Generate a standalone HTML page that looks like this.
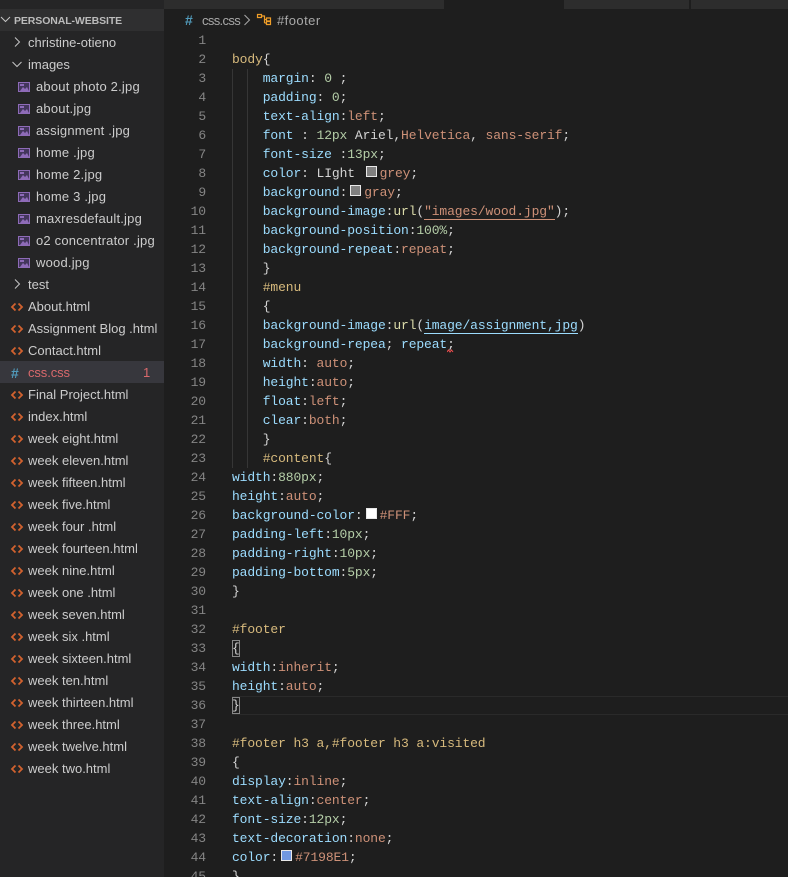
<!DOCTYPE html>
<html><head><meta charset="utf-8"><style>
html,body{margin:0;padding:0;width:788px;height:877px;overflow:hidden;background:#1e1e1e}
#side{position:absolute;left:0;top:0;width:164px;height:877px;background:#252526;font:13px/22px "Liberation Sans",sans-serif;color:#cccccc;overflow:hidden}
#hdr{position:absolute;left:0;top:9px;width:164px;height:22px;background:#2f2f30;font-weight:bold;font-size:10.500px;letter-spacing:-.1px;color:#bbbbbb}
#hdr span{position:absolute;left:14px;top:1px}
.r{position:absolute;left:0;width:164px;height:22px;white-space:nowrap}
.r b{position:absolute;font-weight:normal;top:1px}
.r svg{position:absolute;left:0;top:1px}
.i b{letter-spacing:.2px}
.i rect.o{fill:#43365c;stroke:#8e6bb8}
.h path{fill:none;stroke:#d2622f;stroke-width:1.800}
#tabs{position:absolute;left:164px;top:0;width:624px;height:9px;background:#1e1e1e}
.tab{position:absolute;top:0;height:9px;background:#2d2d2d}
#crumb{position:absolute;left:164px;top:9px;width:624px;height:22px;font:13px/22px "Liberation Sans",sans-serif;color:#a9a9a9}
#code{position:absolute;left:164px;top:31px;width:624px;height:846px;overflow:hidden;font:13px/19px "Liberation Mono",monospace;letter-spacing:-.12px;color:#d4d4d4}
.l{position:absolute;left:0;width:624px;height:19px;white-space:pre}
.n{position:absolute;left:0;width:42px;text-align:right;color:#858585}
.c{position:absolute;left:68px}
.p{color:#9cdcfe}.v{color:#ce9178}.m{color:#b5cea8}.s{color:#d7ba7d}.f{color:#dcdcaa}
.u{border-bottom:1px solid #ce9178}.ub{color:#9cdcfe;border-bottom:1px solid #9cdcfe}
.sw{display:inline-block;width:9px;height:9px;border:1px solid #e8e8e8;margin:0 3px 0 3px;vertical-align:0}
.g{position:absolute;width:1px;background:#363636}
.br{position:absolute;width:8px;height:17px;border:1px solid #888;box-sizing:border-box}
</style></head><body>
<div id="tabs"><div class="tab" style="left:0;width:280px"></div><div class="tab" style="left:400px;width:125px"></div><div class="tab" style="left:527px;width:97px"></div></div>
<div id="side">
<div id="hdr"><svg width="14" height="22" style="position:absolute;left:0;top:0"><path d="M1 8l4.500 4.500L10 8" fill="none" stroke="#c5c5c5" stroke-width="1"/></svg><span>PERSONAL-WEBSITE</span></div>
<div class="r" style="top:31px"><svg width="28" height="22"><path d="M15 5.500l4.500 4.500-4.500 4.500" fill="none" stroke="#c5c5c5"/></svg><b style="left:28px">christine-otieno</b></div>
<div class="r" style="top:53px"><svg width="28" height="22"><path d="M12.500 8l4.500 4.500L21.500 8" fill="none" stroke="#c5c5c5"/></svg><b style="left:28px">images</b></div>
<div class="r i" style="top:75px"><svg width="36" height="22"><rect class="o" x="18.500" y="6.500" width="11" height="9"/><path d="M20 15l3-4 2 2 2-2 2 4z" fill="#8e6bb8"/><rect x="20" y="8" width="4" height="2" fill="#8e6bb8"/></svg><b style="left:36px">about photo 2.jpg</b></div>
<div class="r i" style="top:97px"><svg width="36" height="22"><rect class="o" x="18.500" y="6.500" width="11" height="9"/><path d="M20 15l3-4 2 2 2-2 2 4z" fill="#8e6bb8"/><rect x="20" y="8" width="4" height="2" fill="#8e6bb8"/></svg><b style="left:36px">about.jpg</b></div>
<div class="r i" style="top:119px"><svg width="36" height="22"><rect class="o" x="18.500" y="6.500" width="11" height="9"/><path d="M20 15l3-4 2 2 2-2 2 4z" fill="#8e6bb8"/><rect x="20" y="8" width="4" height="2" fill="#8e6bb8"/></svg><b style="left:36px">assignment .jpg</b></div>
<div class="r i" style="top:141px"><svg width="36" height="22"><rect class="o" x="18.500" y="6.500" width="11" height="9"/><path d="M20 15l3-4 2 2 2-2 2 4z" fill="#8e6bb8"/><rect x="20" y="8" width="4" height="2" fill="#8e6bb8"/></svg><b style="left:36px">home .jpg</b></div>
<div class="r i" style="top:163px"><svg width="36" height="22"><rect class="o" x="18.500" y="6.500" width="11" height="9"/><path d="M20 15l3-4 2 2 2-2 2 4z" fill="#8e6bb8"/><rect x="20" y="8" width="4" height="2" fill="#8e6bb8"/></svg><b style="left:36px">home 2.jpg</b></div>
<div class="r i" style="top:185px"><svg width="36" height="22"><rect class="o" x="18.500" y="6.500" width="11" height="9"/><path d="M20 15l3-4 2 2 2-2 2 4z" fill="#8e6bb8"/><rect x="20" y="8" width="4" height="2" fill="#8e6bb8"/></svg><b style="left:36px">home 3 .jpg</b></div>
<div class="r i" style="top:207px"><svg width="36" height="22"><rect class="o" x="18.500" y="6.500" width="11" height="9"/><path d="M20 15l3-4 2 2 2-2 2 4z" fill="#8e6bb8"/><rect x="20" y="8" width="4" height="2" fill="#8e6bb8"/></svg><b style="left:36px">maxresdefault.jpg</b></div>
<div class="r i" style="top:229px"><svg width="36" height="22"><rect class="o" x="18.500" y="6.500" width="11" height="9"/><path d="M20 15l3-4 2 2 2-2 2 4z" fill="#8e6bb8"/><rect x="20" y="8" width="4" height="2" fill="#8e6bb8"/></svg><b style="left:36px">o2 concentrator .jpg</b></div>
<div class="r i" style="top:251px"><svg width="36" height="22"><rect class="o" x="18.500" y="6.500" width="11" height="9"/><path d="M20 15l3-4 2 2 2-2 2 4z" fill="#8e6bb8"/><rect x="20" y="8" width="4" height="2" fill="#8e6bb8"/></svg><b style="left:36px">wood.jpg</b></div>
<div class="r" style="top:273px"><svg width="28" height="22"><path d="M15 5.500l4.500 4.500-4.500 4.500" fill="none" stroke="#c5c5c5"/></svg><b style="left:28px">test</b></div>
<div class="r h" style="top:295px"><svg width="28" height="22"><path d="M15.500 7.500L12 11l3.500 3.500M18.500 7.500L22 11l-3.500 3.500"/></svg><b style="left:28px">About.html</b></div>
<div class="r h" style="top:317px"><svg width="28" height="22"><path d="M15.500 7.500L12 11l3.500 3.500M18.500 7.500L22 11l-3.500 3.500"/></svg><b style="left:28px">Assignment Blog .html</b></div>
<div class="r h" style="top:339px"><svg width="28" height="22"><path d="M15.500 7.500L12 11l3.500 3.500M18.500 7.500L22 11l-3.500 3.500"/></svg><b style="left:28px">Contact.html</b></div>
<div class="r" style="top:361px;background:#37373d;color:#d9696c"><b style="left:11px;color:#519aba;font-weight:bold;font-size:14px">#</b><b style="left:28px;letter-spacing:-.1px">css.css</b><b style="left:143px">1</b></div>
<div class="r h" style="top:383px"><svg width="28" height="22"><path d="M15.500 7.500L12 11l3.500 3.500M18.500 7.500L22 11l-3.500 3.500"/></svg><b style="left:28px">Final Project.html</b></div>
<div class="r h" style="top:405px"><svg width="28" height="22"><path d="M15.500 7.500L12 11l3.500 3.500M18.500 7.500L22 11l-3.500 3.500"/></svg><b style="left:28px">index.html</b></div>
<div class="r h" style="top:427px"><svg width="28" height="22"><path d="M15.500 7.500L12 11l3.500 3.500M18.500 7.500L22 11l-3.500 3.500"/></svg><b style="left:28px">week eight.html</b></div>
<div class="r h" style="top:449px"><svg width="28" height="22"><path d="M15.500 7.500L12 11l3.500 3.500M18.500 7.500L22 11l-3.500 3.500"/></svg><b style="left:28px">week eleven.html</b></div>
<div class="r h" style="top:471px"><svg width="28" height="22"><path d="M15.500 7.500L12 11l3.500 3.500M18.500 7.500L22 11l-3.500 3.500"/></svg><b style="left:28px">week fifteen.html</b></div>
<div class="r h" style="top:493px"><svg width="28" height="22"><path d="M15.500 7.500L12 11l3.500 3.500M18.500 7.500L22 11l-3.500 3.500"/></svg><b style="left:28px">week five.html</b></div>
<div class="r h" style="top:515px"><svg width="28" height="22"><path d="M15.500 7.500L12 11l3.500 3.500M18.500 7.500L22 11l-3.500 3.500"/></svg><b style="left:28px">week four .html</b></div>
<div class="r h" style="top:537px"><svg width="28" height="22"><path d="M15.500 7.500L12 11l3.500 3.500M18.500 7.500L22 11l-3.500 3.500"/></svg><b style="left:28px">week fourteen.html</b></div>
<div class="r h" style="top:559px"><svg width="28" height="22"><path d="M15.500 7.500L12 11l3.500 3.500M18.500 7.500L22 11l-3.500 3.500"/></svg><b style="left:28px">week nine.html</b></div>
<div class="r h" style="top:581px"><svg width="28" height="22"><path d="M15.500 7.500L12 11l3.500 3.500M18.500 7.500L22 11l-3.500 3.500"/></svg><b style="left:28px">week one .html</b></div>
<div class="r h" style="top:603px"><svg width="28" height="22"><path d="M15.500 7.500L12 11l3.500 3.500M18.500 7.500L22 11l-3.500 3.500"/></svg><b style="left:28px">week seven.html</b></div>
<div class="r h" style="top:625px"><svg width="28" height="22"><path d="M15.500 7.500L12 11l3.500 3.500M18.500 7.500L22 11l-3.500 3.500"/></svg><b style="left:28px">week six .html</b></div>
<div class="r h" style="top:647px"><svg width="28" height="22"><path d="M15.500 7.500L12 11l3.500 3.500M18.500 7.500L22 11l-3.500 3.500"/></svg><b style="left:28px">week sixteen.html</b></div>
<div class="r h" style="top:669px"><svg width="28" height="22"><path d="M15.500 7.500L12 11l3.500 3.500M18.500 7.500L22 11l-3.500 3.500"/></svg><b style="left:28px">week ten.html</b></div>
<div class="r h" style="top:691px"><svg width="28" height="22"><path d="M15.500 7.500L12 11l3.500 3.500M18.500 7.500L22 11l-3.500 3.500"/></svg><b style="left:28px">week thirteen.html</b></div>
<div class="r h" style="top:713px"><svg width="28" height="22"><path d="M15.500 7.500L12 11l3.500 3.500M18.500 7.500L22 11l-3.500 3.500"/></svg><b style="left:28px">week three.html</b></div>
<div class="r h" style="top:735px"><svg width="28" height="22"><path d="M15.500 7.500L12 11l3.500 3.500M18.500 7.500L22 11l-3.500 3.500"/></svg><b style="left:28px">week twelve.html</b></div>
<div class="r h" style="top:757px"><svg width="28" height="22"><path d="M15.500 7.500L12 11l3.500 3.500M18.500 7.500L22 11l-3.500 3.500"/></svg><b style="left:28px">week two.html</b></div>
</div>
<div id="crumb">
<b style="position:absolute;left:21px;top:0;color:#519aba;font-size:14px">#</b>
<span style="position:absolute;left:38px;top:1px;letter-spacing:-.65px">css.css</span>
<svg width="12" height="22" style="position:absolute;left:78px;top:0"><path d="M2.500 6l5 5-5 5" fill="none" stroke="#a9a9a9"/></svg>
<svg width="16" height="22" style="position:absolute;left:92px;top:0"><path d="M1.500 5.500h4v3h-4zM5.500 7h3v7M8.500 10.500h2M8.500 14h2M10.500 9h4v3h-4zM10.500 12.500h4v3h-4z" fill="none" stroke="#ee9d28" stroke-width="1.200"/></svg>
<span style="position:absolute;left:113px;top:1px;letter-spacing:.45px">#footer</span>
</div>
<div id="code">
<div class="g" style="left:68px;top:38px;height:399px"></div>
<div class="g" style="left:83px;top:38px;height:399px"></div>
<div style="position:absolute;left:68px;top:665px;width:556px;height:19px;border-top:1px solid #2a2a2a;border-bottom:1px solid #2a2a2a;box-sizing:border-box"></div>
<div class="br" style="left:68px;top:609px"></div>
<div class="br" style="left:68px;top:666px"></div>
<div class="l" style="top:0px"><span class="n">1</span></div>
<div class="l" style="top:19px"><span class="n">2</span><span class="c"><span class="s">body</span>{</span></div>
<div class="l" style="top:38px"><span class="n">3</span><span class="c">    <span class="p">margin</span>: <span class="m">0</span> ;</span></div>
<div class="l" style="top:57px"><span class="n">4</span><span class="c">    <span class="p">padding</span>: <span class="m">0</span>;</span></div>
<div class="l" style="top:76px"><span class="n">5</span><span class="c">    <span class="p">text-align</span>:<span class="v">left</span>;</span></div>
<div class="l" style="top:95px"><span class="n">6</span><span class="c">    <span class="p">font</span> : <span class="m">12px</span> Ariel,<span class="v">Helvetica</span>, <span class="v">sans-serif</span>;</span></div>
<div class="l" style="top:114px"><span class="n">7</span><span class="c">    <span class="p">font-size</span> :<span class="m">13px</span>;</span></div>
<div class="l" style="top:133px"><span class="n">8</span><span class="c">    <span class="p">color</span>: LIght <i class="sw" style="background:#808080"></i><span class="v">grey</span>;</span></div>
<div class="l" style="top:152px"><span class="n">9</span><span class="c">    <span class="p">background</span>:<i class="sw" style="background:#808080"></i><span class="v">gray</span>;</span></div>
<div class="l" style="top:171px"><span class="n">10</span><span class="c">    <span class="p">background-image</span>:<span class="f">url</span>(<span class="v u">"images/wood.jpg"</span>);</span></div>
<div class="l" style="top:190px"><span class="n">11</span><span class="c">    <span class="p">background-position</span>:<span class="m">100%</span>;</span></div>
<div class="l" style="top:209px"><span class="n">12</span><span class="c">    <span class="p">background-repeat</span>:<span class="v">repeat</span>;</span></div>
<div class="l" style="top:228px"><span class="n">13</span><span class="c">    }</span></div>
<div class="l" style="top:247px"><span class="n">14</span><span class="c">    <span class="s">#menu</span></span></div>
<div class="l" style="top:266px"><span class="n">15</span><span class="c">    {</span></div>
<div class="l" style="top:285px"><span class="n">16</span><span class="c">    <span class="p">background-image</span>:<span class="f">url</span>(<span class="ub">image/assignment,jpg</span>)</span></div>
<div class="l" style="top:304px"><span class="n">17</span><span class="c">    <span class="p">background-repea</span>; <span class="p">repeat</span>;</span></div>
<div class="l" style="top:323px"><span class="n">18</span><span class="c">    <span class="p">width</span>: <span class="v">auto</span>;</span></div>
<div class="l" style="top:342px"><span class="n">19</span><span class="c">    <span class="p">height</span>:<span class="v">auto</span>;</span></div>
<div class="l" style="top:361px"><span class="n">20</span><span class="c">    <span class="p">float</span>:<span class="v">left</span>;</span></div>
<div class="l" style="top:380px"><span class="n">21</span><span class="c">    <span class="p">clear</span>:<span class="v">both</span>;</span></div>
<div class="l" style="top:399px"><span class="n">22</span><span class="c">    }</span></div>
<div class="l" style="top:418px"><span class="n">23</span><span class="c">    <span class="s">#content</span>{</span></div>
<div class="l" style="top:437px"><span class="n">24</span><span class="c"><span class="p">width</span>:<span class="m">880px</span>;</span></div>
<div class="l" style="top:456px"><span class="n">25</span><span class="c"><span class="p">height</span>:<span class="v">auto</span>;</span></div>
<div class="l" style="top:475px"><span class="n">26</span><span class="c"><span class="p">background-color</span>:<i class="sw" style="background:#fff"></i><span class="v">#FFF</span>;</span></div>
<div class="l" style="top:494px"><span class="n">27</span><span class="c"><span class="p">padding-left</span>:<span class="m">10px</span>;</span></div>
<div class="l" style="top:513px"><span class="n">28</span><span class="c"><span class="p">padding-right</span>:<span class="m">10px</span>;</span></div>
<div class="l" style="top:532px"><span class="n">29</span><span class="c"><span class="p">padding-bottom</span>:<span class="m">5px</span>;</span></div>
<div class="l" style="top:551px"><span class="n">30</span><span class="c">}</span></div>
<div class="l" style="top:570px"><span class="n">31</span></div>
<div class="l" style="top:589px"><span class="n">32</span><span class="c"><span class="s">#footer</span></span></div>
<div class="l" style="top:608px"><span class="n">33</span><span class="c">{</span></div>
<div class="l" style="top:627px"><span class="n">34</span><span class="c"><span class="p">width</span>:<span class="v">inherit</span>;</span></div>
<div class="l" style="top:646px"><span class="n">35</span><span class="c"><span class="p">height</span>:<span class="v">auto</span>;</span></div>
<div class="l" style="top:665px"><span class="n">36</span><span class="c">}</span></div>
<div class="l" style="top:684px"><span class="n">37</span></div>
<div class="l" style="top:703px"><span class="n">38</span><span class="c"><span class="s">#footer h3 a,#footer h3 a:visited</span></span></div>
<div class="l" style="top:722px"><span class="n">39</span><span class="c">{</span></div>
<div class="l" style="top:741px"><span class="n">40</span><span class="c"><span class="p">display</span>:<span class="v">inline</span>;</span></div>
<div class="l" style="top:760px"><span class="n">41</span><span class="c"><span class="p">text-align</span>:<span class="v">center</span>;</span></div>
<div class="l" style="top:779px"><span class="n">42</span><span class="c"><span class="p">font-size</span>:<span class="m">12px</span>;</span></div>
<div class="l" style="top:798px"><span class="n">43</span><span class="c"><span class="p">text-decoration</span>:<span class="v">none</span>;</span></div>
<div class="l" style="top:817px"><span class="n">44</span><span class="c"><span class="p">color</span>:<i class="sw" style="background:#7198e1"></i><span class="v">#7198E1</span>;</span></div>
<div class="l" style="top:836px"><span class="n">45</span><span class="c">}</span></div>
<svg width="8" height="4" style="position:absolute;left:283px;top:318px"><path d="M0 3l1.500-2 1.500 2 1.500-2 1.500 2" fill="none" stroke="#f14c4c"/></svg>
</div>
</body></html>
